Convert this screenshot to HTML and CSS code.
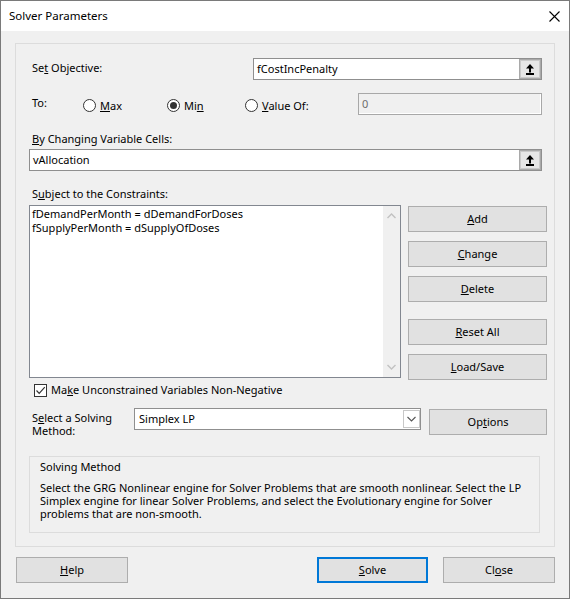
FILE: index.html
```html
<!DOCTYPE html>
<html>
<head>
<meta charset="utf-8">
<link rel="stylesheet" href="styles.css">
</head>
<body>
<div class="window">
  <div class="titlebar">
    <span class="title">Solver Parameters</span>
    <svg class="close" width="11" height="11" viewBox="0 0 11 11"><path d="M0.5 0.5 L10.5 10.5 M10.5 0.5 L0.5 10.5" stroke="#000" stroke-width="1.1" fill="none"/></svg>
  </div>
  <div class="client">
    <div class="panel">
      <div class="row row-obj">
        <span class="lbl lbl-obj">Se<u>t</u> Objective:</span>
        <div class="refedit w-obj">
          <span class="val">fCostIncPenalty</span>
          <span class="refbtn"><svg width="8" height="11" viewBox="0 0 8 11"><path d="M4 0 L8 4.5 L0 4.5 Z M3 4.5 H5 V8.5 H3 Z M0 9 H8 V11 H0 Z" fill="#000"/></svg></span>
        </div>
      </div>
      <div class="row row-to">
        <span class="lbl lbl-to">To:</span>
        <span class="radio r-max"><span class="circle"></span><span class="rlbl"><u>M</u>ax</span></span>
        <span class="radio r-min"><span class="circle checked"></span><span class="rlbl">Mi<u>n</u></span></span>
        <span class="radio r-val"><span class="circle"></span><span class="rlbl"><u>V</u>alue Of:</span></span>
        <div class="textbox disabled w-val"><span class="val">0</span></div>
      </div>
      <div class="lbl lbl-by"><u>B</u>y Changing Variable Cells:</div>
      <div class="refedit w-by">
        <span class="val">vAllocation</span>
        <span class="refbtn"><svg width="8" height="11" viewBox="0 0 8 11"><path d="M4 0 L8 4.5 L0 4.5 Z M3 4.5 H5 V8.5 H3 Z M0 9 H8 V11 H0 Z" fill="#000"/></svg></span>
      </div>
      <div class="lbl lbl-sub">S<u>u</u>bject to the Constraints:</div>
      <div class="row row-list">
        <div class="listbox">
          <div class="items">
            <div>fDemandPerMonth = dDemandForDoses</div>
            <div>fSupplyPerMonth = dSupplyOfDoses</div>
          </div>
          <div class="scroll">
            <svg width="9" height="6" viewBox="0 0 9 6"><path d="M0.5 5 L4.5 1 L8.5 5" stroke="#c2c2c2" stroke-width="1.4" fill="none"/></svg>
            <svg width="9" height="6" viewBox="0 0 9 6"><path d="M0.5 1 L4.5 5 L8.5 1" stroke="#c2c2c2" stroke-width="1.4" fill="none"/></svg>
          </div>
        </div>
        <div class="sidebtns">
          <div class="btn b-add"><u>A</u>dd</div>
          <div class="btn b-change"><u>C</u>hange</div>
          <div class="btn b-delete"><u>D</u>elete</div>
          <div class="btn b-reset"><u>R</u>eset All</div>
          <div class="btn b-load"><u>L</u>oad/Save</div>
        </div>
      </div>
      <div class="row row-check">
        <span class="checkbox"><svg width="11" height="11" viewBox="0 0 11 11"><path d="M1.5 5.5 L4.2 8.3 L9.8 2.2" stroke="#333" stroke-width="1.2" fill="none"/></svg></span>
        <span class="clbl">Ma<u>k</u>e Unconstrained Variables Non-Negative</span>
      </div>
      <div class="row row-sel">
        <span class="lbl lbl-sel">S<u>e</u>lect a Solving<br>Method:</span>
        <div class="combo">
          <span class="val">Simplex LP</span>
          <span class="dropbtn"><svg width="9" height="6" viewBox="0 0 9 6"><path d="M0.5 1 L4.5 5 L8.5 1" stroke="#555" stroke-width="1.1" fill="none"/></svg></span>
        </div>
        <div class="btn b-options">Op<u>t</u>ions</div>
      </div>
      <div class="group">
        <div class="gtitle">Solving Method</div>
        <p class="gtext">Select the GRG Nonlinear engine for Solver Problems that are smooth nonlinear. Select the LP<br>Simplex engine for linear Solver Problems, and select the Evolutionary engine for Solver<br>problems that are non-smooth.</p>
      </div>
    </div>
    <div class="footer">
      <div class="btn b-help"><u>H</u>elp</div>
      <div class="btn b-solve"><u>S</u>olve</div>
      <div class="btn b-close">Cl<u>o</u>se</div>
    </div>
  </div>
</div>
</body>
</html>
```
FILE: styles.css
```css
* { box-sizing: border-box; }
html, body { margin: 0; padding: 0; }
body {
  font-family: "Noto Sans", "Open Sans", sans-serif;
  font-size: 11px;
  line-height: 16px;
  color: #000;
  background: #f0f0f0;
}
u { text-underline-offset: 1px; text-decoration-thickness: 1px; }
.window {
  width: 570px;
  height: 599px;
  border: 1px solid #7a7a7a;
  background: #f0f0f0;
  display: flex;
  flex-direction: column;
}
.titlebar {
  height: 30px;
  background: #fff;
  display: flex;
  align-items: center;
  justify-content: space-between;
  padding: 0 9px 0 8px;
}
.title { color: #000; font-size: 11.5px; }
.close { display: block; }
.client { flex: 1; }
.panel {
  margin: 12px 14px 0 14px;
  height: 504px;
  border: 1px solid #dcdcdc;
  padding-left: 13px;
  padding-top: 14px;
}
.row { display: flex; align-items: flex-start; }
.lbl { padding-left: 3px; white-space: nowrap; }
.row-obj { height: 22px; }
.lbl-obj { width: 224px; padding-top: 2px; }
.refedit, .textbox, .combo {
  height: 22px;
  border: 1px solid #8f8f8f;
  background: #fff;
  display: flex;
  align-items: flex-start;
}
.refedit .val, .textbox .val { flex: 1; padding: 2px 0 0 3px; white-space: nowrap; }
.w-obj { width: 289px; }
.refbtn {
  width: 22px;
  height: 20px;
  background: #e6e6e6;
  border: 1px solid #a9a9a9;
  box-shadow: inset 0 0 0 1px #c9c9c9;
  display: flex;
  align-items: center;
  justify-content: center;
}
.refbtn svg { display: block; }
.row-to { margin-top: 13px; height: 22px; }
.lbl-to { width: 54px; padding-top: 2px; }
.radio { display: flex; align-items: flex-start; }
.r-max { width: 84px; }
.r-min { width: 78px; }
.r-val { width: 113px; }
.circle {
  width: 13px;
  height: 13px;
  margin-top: 6px;
  border: 1px solid #333;
  border-radius: 50%;
  background: #fff;
  display: flex;
  align-items: center;
  justify-content: center;
  flex: none;
}
.circle.checked::after {
  content: "";
  width: 7px;
  height: 7px;
  border-radius: 50%;
  background: #333;
}
.rlbl { margin-left: 4px; padding-top: 5px; white-space: nowrap; }
.w-val { width: 184px; }
.textbox.disabled {
  background: #f0f0f0;
  border-color: #a8a8a8;
  box-shadow: inset -1px -1px 0 #fff;
}
.textbox.disabled .val { color: #6d6d6d; padding-left: 3px; }
.lbl-by { margin-top: 16px; }
.w-by { width: 513px; margin-top: 2px; }
.w-by .val { padding-left: 3px; }
.lbl-sub { margin-top: 15px; }
.row-list { margin-top: 3px; height: 173px; }
.listbox {
  width: 372px;
  height: 173px;
  border: 1px solid #828790;
  background: #fff;
  display: flex;
}
.items { flex: 1; padding: 1px 0 0 2px; line-height: 13.5px; white-space: nowrap; }
.scroll {
  width: 17px;
  background: #f0f0f0;
  display: flex;
  flex-direction: column;
  justify-content: space-between;
  align-items: center;
  padding: 7px 0 7px 0;
}
.scroll svg { display: block; }
.sidebtns { margin-left: 7px; margin-top: 1px; width: 139px; display: flex; flex-direction: column; }
.btn {
  height: 26px;
  border: 1px solid #adadad;
  background: #e1e1e1;
  display: flex;
  align-items: center;
  justify-content: center;
  white-space: nowrap;
}
.b-change, .b-delete, .b-load { margin-top: 9px; }
.b-reset { margin-top: 17px; }
.row-check { margin-top: 4px; height: 16px; }
.checkbox {
  margin-left: 5px;
  margin-top: 2px;
  width: 13px;
  height: 13px;
  border: 1px solid #333;
  background: #fff;
  display: flex;
  align-items: center;
  justify-content: center;
}
.checkbox svg { display: block; }
.clbl { margin-left: 4px; white-space: nowrap; }
.row-sel { margin-top: 10px; height: 27px; }
.lbl-sel { width: 105px; line-height: 13px; padding-top: 3px; }
.combo { width: 287px; align-items: stretch; }
.combo .val { flex: 1; padding: 2px 0 0 4px; }
.dropbtn {
  width: 17px;
  margin: 1px 0 1px 0;
  border: 1px solid #c8c8c8;
  background: #fff;
  display: flex;
  align-items: center;
  justify-content: center;
}
.b-options { width: 118px; margin-left: 8px; margin-top: 1px; }
.group {
  margin-top: 21px;
  width: 511px;
  height: 77px;
  border: 1px solid #dcdcdc;
  padding: 2px 0 0 10px;
}
.gtitle { line-height: 16px; }
.gtext { margin: 6px 0 0 0; line-height: 13px; white-space: nowrap; }
.footer { display: flex; margin-top: 10px; }
.b-help { width: 112px; margin-left: 15px; }
.b-solve { width: 111px; margin-left: 189px; border: 2px solid #0078d7; }
.b-close { width: 112px; margin-left: 15px; }
```
